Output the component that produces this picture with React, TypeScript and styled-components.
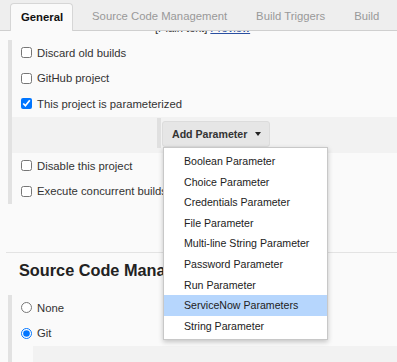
import styled, { createGlobalStyle } from "styled-components";
import React from "react";

const GlobalStyle = createGlobalStyle`
    html, body {
        margin: 0;
        padding: 0;
        background: #fafafa;
        font-family: "Liberation Sans", Arial, sans-serif;
        color: #333;
        overflow: hidden;
    }
`;

const Page = styled.div({
    width: "397px",
    height: "362px",
    overflow: "hidden",
    background: "#fafafa",
});

const TabBar = styled.div({
    display: "flex",
    alignItems: "flex-end",
    gap: "8px",
    height: "30px",
    padding: "0 0 0 10px",
    background: "#eeeeee",
    borderBottom: "1px solid #cfcfcf",
});

const Tab = styled.div<{ active?: boolean }>((props) => ({
    height: "27px",
    lineHeight: "26px",
    padding: "0 9px 0 10px",
    marginBottom: props.active ? "-1px" : "0",
    fontSize: "11.3px",
    fontWeight: props.active ? 700 : 400,
    color: props.active ? "#111" : "#999",
    background: props.active ? "#fafafa" : "transparent",
    border: props.active ? "1px solid #d6d6d6" : "1px solid transparent",
    borderBottom: "none",
    borderRadius: "4px 4px 0 0",
    whiteSpace: "nowrap",
}));

const ClipLine = styled.div({
    height: "4px",
    overflow: "hidden",
    paddingLeft: "155px",
});

const ClipText = styled.div({
    marginTop: "-10px",
    fontSize: "11.2px",
    lineHeight: "14px",
    whiteSpace: "nowrap",
    "& a": {
        color: "#2a4fa0",
        textDecoration: "underline",
    },
});

const Section = styled.div<{ top: string }>((props) => ({
    marginTop: props.top,
    marginLeft: "8px",
    borderLeft: "4px solid #e2e2e2",
}));

const CheckRow = styled.label({
    display: "flex",
    alignItems: "center",
    gap: "5px",
    height: "25.5px",
    paddingLeft: "8px",
    fontSize: "11.3px",
    color: "#333",
    whiteSpace: "nowrap",
    "& input": {
        width: "11px",
        height: "11px",
        margin: "0 0 0 1px",
    },
});

const ParamBlock = styled.div({
    background: "#f2f2f2",
    padding: "1.5px 0 5px",
});

const ParamInner = styled.div({
    marginLeft: "145px",
    borderLeft: "4px solid #e0e0e0",
    padding: "3px 0 1px 1px",
});

const ButtonWrap = styled.div({
    position: "relative",
    display: "inline-block",
});

const AddButton = styled.button({
    display: "flex",
    alignItems: "center",
    gap: "8px",
    height: "26px",
    padding: "0 8px 0 9px",
    background: "#e6e6e6",
    border: "1px solid #dcdcdc",
    borderRadius: "3px",
    fontFamily: "inherit",
    fontSize: "10.6px",
    fontWeight: 700,
    color: "#333",
});

const Caret = styled.span({
    width: 0,
    height: 0,
    borderLeft: "3.5px solid transparent",
    borderRight: "3.5px solid transparent",
    borderTop: "4px solid #222",
});

const Menu = styled.ul({
    position: "absolute",
    top: "100%",
    left: "1px",
    zIndex: 10,
    width: "163px",
    margin: 0,
    padding: "3px 0",
    listStyle: "none",
    background: "#fff",
    border: "1px solid #c8c8c8",
    boxShadow: "0 2px 5px rgba(0, 0, 0, 0.22)",
});

const MenuItem = styled.li<{ highlighted?: boolean }>((props) => ({
    height: "20.6px",
    lineHeight: "20.6px",
    paddingLeft: "20px",
    fontSize: "10.6px",
    color: "#222",
    whiteSpace: "nowrap",
    background: props.highlighted ? "#b6d6fd" : "transparent",
}));

const Divider = styled.div({
    marginTop: "48px",
    marginLeft: "6px",
    borderTop: "1px solid #e3e3e3",
});

const Heading = styled.h2({
    margin: "0 0 8px",
    paddingLeft: "19px",
    lineHeight: "34px",
    fontSize: "16.3px",
    fontWeight: 700,
    color: "#222",
    whiteSpace: "nowrap",
});

const NestedBlock = styled.div({
    marginLeft: "21px",
    height: "20px",
    background: "#f2f2f2",
});

const parameterTypes = [
    "Boolean Parameter",
    "Choice Parameter",
    "Credentials Parameter",
    "File Parameter",
    "Multi-line String Parameter",
    "Password Parameter",
    "Run Parameter",
    "ServiceNow Parameters",
    "String Parameter",
];

export default function App() {
    return (
        <Page>
            <GlobalStyle />
            <TabBar>
                <Tab active>General</Tab>
                <Tab>Source Code Management</Tab>
                <Tab>Build Triggers</Tab>
                <Tab>Build</Tab>
            </TabBar>
            <ClipLine>
                <ClipText>
                    [Plain text] <a href="#">Preview</a>
                </ClipText>
            </ClipLine>
            <Section top="5px">
                <CheckRow>
                    <input type="checkbox" />
                    Discard old builds
                </CheckRow>
                <CheckRow>
                    <input type="checkbox" />
                    GitHub project
                </CheckRow>
                <CheckRow>
                    <input type="checkbox" defaultChecked />
                    This project is parameterized
                </CheckRow>
                <ParamBlock>
                    <ParamInner>
                        <ButtonWrap>
                            <AddButton>
                                Add Parameter
                                <Caret />
                            </AddButton>
                            <Menu>
                                {parameterTypes.map((name) => (
                                    <MenuItem
                                        key={name}
                                        highlighted={name === "ServiceNow Parameters"}
                                    >
                                        {name}
                                    </MenuItem>
                                ))}
                            </Menu>
                        </ButtonWrap>
                    </ParamInner>
                </ParamBlock>
                <CheckRow>
                    <input type="checkbox" />
                    Disable this project
                </CheckRow>
                <CheckRow>
                    <input type="checkbox" />
                    Execute concurrent builds if necessary
                </CheckRow>
            </Section>
            <Divider />
            <Heading>Source Code Management</Heading>
            <Section top="0">
                <CheckRow>
                    <input type="radio" name="scm" />
                    None
                </CheckRow>
                <CheckRow>
                    <input type="radio" name="scm" defaultChecked />
                    Git
                </CheckRow>
                <NestedBlock />
            </Section>
        </Page>
    );
}
